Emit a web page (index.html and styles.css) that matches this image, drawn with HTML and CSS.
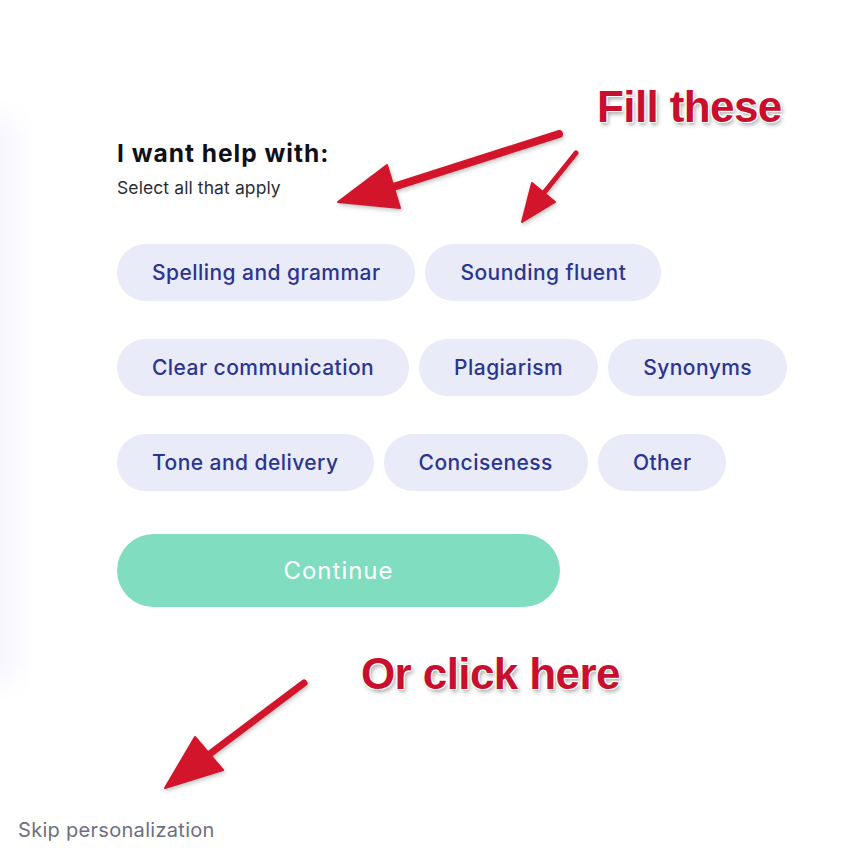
FILE: index.html
```html
<!DOCTYPE html>
<html lang="en">
<head>
<meta charset="utf-8">
<title>I want help with</title>
<link rel="stylesheet" href="styles.css">
</head>
<body>
<div class="page">
  <div class="form">
    <h1 class="title">I want help with:</h1>
    <p class="subtitle">Select all that apply</p>
    <div class="chips">
      <div class="chip-row">
        <button class="chip">Spelling and grammar</button>
        <button class="chip">Sounding fluent</button>
      </div>
      <div class="chip-row">
        <button class="chip">Clear communication</button>
        <button class="chip">Plagiarism</button>
        <button class="chip">Synonyms</button>
      </div>
      <div class="chip-row">
        <button class="chip">Tone and delivery</button>
        <button class="chip">Conciseness</button>
        <button class="chip">Other</button>
      </div>
    </div>
    <button class="continue">Continue</button>
  </div>
  <a class="skip" href="#">Skip personalization</a>

  <div class="note note-fill">Fill these</div>
  <div class="note note-click">Or click here</div>

  <svg class="arrows" width="852" height="864" viewBox="0 0 852 864">
    <g fill="#d3152c" stroke="#d3152c" stroke-linejoin="round" stroke-linecap="round">
      <line x1="559" y1="134" x2="390" y2="188" stroke-width="8"/>
      <polygon points="338,202 387,165 400,208" stroke-width="2"/>
      <line x1="576" y1="153" x2="543" y2="194" stroke-width="5"/>
      <polygon points="522,222 532,183 555,202" stroke-width="2"/>
      <line x1="304" y1="683" x2="207" y2="756" stroke-width="7"/>
      <polygon points="165,788 195,737 223,770" stroke-width="2"/>
    </g>
  </svg>
</div>
</body>
</html>
```

FILE: styles.css
```css
html, body {
  margin: 0;
  padding: 0;
  background: #ffffff;
}

.page {
  position: relative;
  width: 852px;
  height: 864px;
  overflow: hidden;
  font-family: Inter, "Noto Sans", "Liberation Sans", sans-serif;
  background-image:
    linear-gradient(to bottom, rgba(255,255,255,1) 0px, rgba(255,255,255,0) 40px, rgba(255,255,255,0) 560px, rgba(255,255,255,1) 600px),
    linear-gradient(to right, #f6f6fd 0px, #f8f8fe 8px, #fbfbfe 16px, #fdfdfe 28px, #ffffff 34px);
  background-size: 34px 600px, 34px 600px;
  background-position: 0 100px, 0 100px;
  background-repeat: no-repeat;
}

.form {
  padding: 139px 0 0 117px;
  display: flex;
  flex-direction: column;
  align-items: flex-start;
}

.title {
  margin: 0;
  font-size: 24.5px;
  line-height: 29px;
  font-weight: 700;
  color: #0e101a;
  letter-spacing: 1px;
}

.subtitle {
  margin: 9px 0 0;
  font-size: 17.5px;
  line-height: 22px;
  color: #2b2d38;
  letter-spacing: 0.1px;
}

.chips {
  margin-top: 45px;
  display: flex;
  flex-direction: column;
  gap: 38px;
}

.chip-row {
  display: flex;
  gap: 10px;
}

.chip {
  height: 57px;
  padding: 0 35px;
  border: none;
  border-radius: 29px;
  background: #e9ebf8;
  color: #2b3590;
  font-family: Inter, "Noto Sans", "Liberation Sans", sans-serif;
  font-size: 21px;
  font-weight: 500;
  letter-spacing: 0.45px;
  line-height: 57px;
  white-space: nowrap;
}

.continue {
  margin-top: 43px;
  width: 443px;
  height: 73px;
  border: none;
  border-radius: 37px;
  background: #80ddc0;
  color: #ffffff;
  font-family: Inter, "Noto Sans", "Liberation Sans", sans-serif;
  font-size: 24px;
  font-weight: 400;
  letter-spacing: 1px;
}

.skip {
  display: block;
  margin: 211px 0 0 18px;
  font-size: 20px;
  line-height: 24px;
  color: #6c6f80;
  letter-spacing: 0.3px;
  text-decoration: none;
}

.note {
  position: absolute;
  font-family: "Liberation Sans", Arial, sans-serif;
  font-weight: 700;
  font-size: 44px;
  line-height: 48px;
  color: #c8102e;
  letter-spacing: -0.6px;
  text-shadow:
    -1px -1px 0 #fff, 1px -1px 0 #fff, -1px 1px 0 #fff, 1px 1px 0 #fff,
    2px 3px 4px rgba(0, 0, 0, 0.35);
}

.note-fill {
  left: 597px;
  top: 83px;
}

.note-click {
  left: 361px;
  top: 650px;
}

.arrows {
  position: absolute;
  left: 0;
  top: 0;
  pointer-events: none;
  filter: drop-shadow(1px 2px 2px rgba(0, 0, 0, 0.25));
}
```
